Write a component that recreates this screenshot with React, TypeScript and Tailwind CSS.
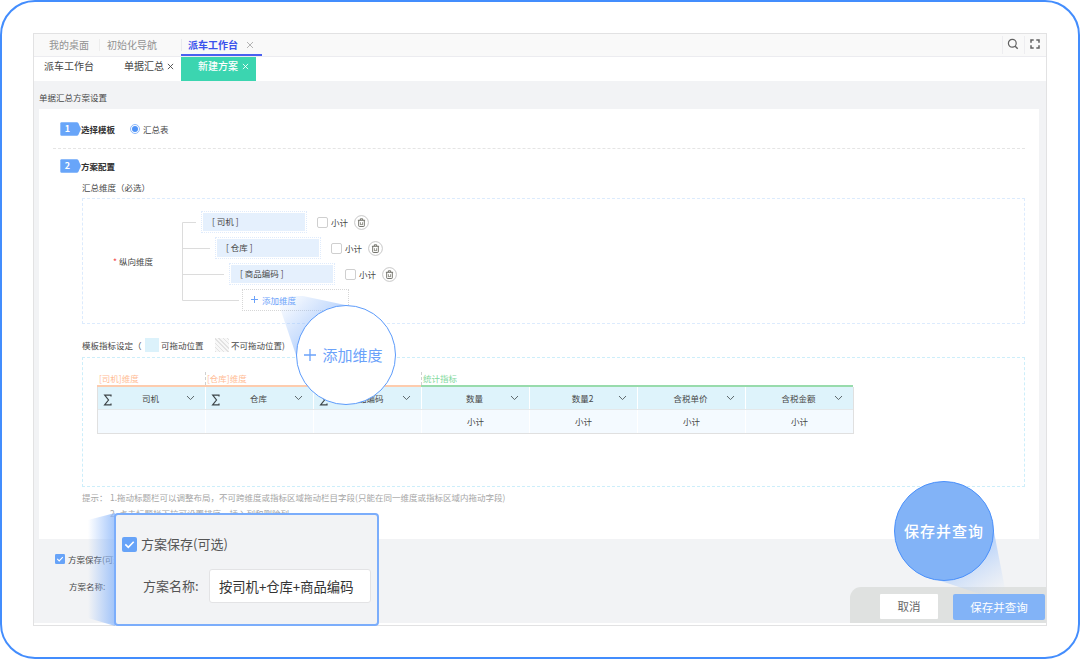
import React from 'react';

const dimensions = [
  { name: '[ 司机 ]', indent: 'ml-0' },
  { name: '[ 仓库 ]', indent: 'ml-[14px]' },
  { name: '[ 商品编码 ]', indent: 'ml-[28px]' },
];

const columns = [
  { title: '司机', label: '[司机]维度', sum: true, total: '' },
  { title: '仓库', label: '[仓库]维度', sum: true, total: '' },
  { title: '商品编码', label: '', sum: true, total: '' },
  { title: '数量', label: '统计指标', sum: false, total: '小计' },
  { title: '数量2', label: '', sum: false, total: '小计' },
  { title: '含税单价', label: '', sum: false, total: '小计' },
  { title: '含税金额', label: '', sum: false, total: '小计' },
];

function CloseIcon({ className }: { className: string }) {
  return (
    <svg viewBox="0 0 8 8" className={`shrink-0 ${className}`} fill="none" stroke="currentColor">
      <path d="M1 1l6 6M7 1L1 7" />
    </svg>
  );
}

function TrashIcon() {
  return (
    <svg viewBox="0 0 15 15" className="ml-[6px] h-[15px] w-[15px] shrink-0" fill="none">
      <circle cx="7.5" cy="7.5" r="6.9" stroke="#b9b9b9" strokeWidth="0.8" />
      <path d="M3.9 5.3h7.2M6.3 5.1V3.8h2.4v1.3M4.7 5.5v5.3q0 .7.7.7h4.2q.7 0 .7-.7V5.5" stroke="#64645c" strokeWidth="0.9" />
      <path d="M6.5 7.2v2.4M8.5 7.2v2.4M6 9.6h3" stroke="#85857c" strokeWidth="0.8" />
    </svg>
  );
}

function CheckedBox({ className }: { className: string }) {
  return (
    <svg viewBox="0 0 15 15" className={`shrink-0 ${className}`}>
      <rect width="15" height="15" rx="2" fill="#67a3f8" />
      <path d="M3.3 7.4l3 3 5.4-5.6" fill="none" stroke="#fff" strokeWidth="1.6" />
    </svg>
  );
}

function StepBadge({ step }: { step: number }) {
  return (
    <div className="relative h-[14px] w-[21px] shrink-0">
      <svg viewBox="0 0 21 14" className="absolute inset-0 h-full w-full">
        <path d="M1.5 0.3h15.3q1 0 1.5.8L21 7l-2.7 5.9q-.5.8-1.5.8H1.5Q.3 13.7.3 12.5v-11Q.3.3 1.5.3z" fill="#68a5f9" />
      </svg>
      <span className="relative block w-[15px] text-center text-[9px] leading-[14px] font-bold text-white">{step}</span>
    </div>
  );
}

function TopTabs() {
  return (
    <div className="flex h-[23px] shrink-0 items-center border-b border-[#ececf0] bg-[#f9f9f9] text-[10px] text-[#929292]">
      <span className="ml-[15px] w-[40px]">我的桌面</span>
      <span className="ml-[10px] h-[12px] w-px bg-[#ededed]" />
      <span className="ml-[7px] w-[50px]">初始化导航</span>
      <span className="ml-[24px] h-[12px] w-px bg-[#e9e9ee]" />
      <div className="-ml-px flex h-[22px] w-[81px] items-center border-b-2 border-[#4a60f0] pt-px font-bold text-[#3a52ec]">
        <span className="ml-[7px] w-[50px]">派车工作台</span>
        <CloseIcon className="ml-[8px] h-[8px] w-[8px] text-[#b4b4b4]" />
      </div>
      <div className="mr-[6px] ml-auto flex h-full items-center text-[#616161]">
        <span className="h-[18px] w-px bg-[#ededf0]" />
        <svg viewBox="0 0 12 12" className="-mt-[2px] ml-[4px] h-[12px] w-[12px]" fill="none" stroke="currentColor" strokeWidth="1.2">
          <circle cx="5.3" cy="5.3" r="3.9" />
          <path d="M8.2 8.2l2.5 2.5" strokeWidth="1.4" />
        </svg>
        <span className="ml-[5px] h-[18px] w-px bg-[#ededf0]" />
        <svg viewBox="0 0 10 10" className="-mt-[2px] ml-[5px] h-[10px] w-[10px]" fill="none" stroke="currentColor" strokeWidth="1.5">
          <path d="M3.7 1H1v2.7M6.3 1H9v2.7M9 6.3V9H6.3M3.7 9H1V6.3" />
        </svg>
      </div>
    </div>
  );
}

function SubTabs() {
  return (
    <div className="flex h-[24px] shrink-0 bg-white text-[10px] leading-[18px] text-[#444]">
      <span className="ml-[10px] w-[50px]">派车工作台</span>
      <div className="ml-[30px] flex">
        <span className="w-[40px]">单据汇总</span>
        <CloseIcon className="mt-[6px] ml-[3px] h-[7px] w-[7px]" />
      </div>
      <div className="ml-[7px] flex h-[24px] w-[75px] bg-[#3bd5b0] text-white">
        <span className="ml-[17px] w-[40px] font-medium">新建方案</span>
        <CloseIcon className="mt-[6px] ml-[4px] h-[7px] w-[7px]" />
      </div>
    </div>
  );
}

function DimensionBox() {
  return (
    <div className="mt-[4px] ml-[43px] flex h-[126px] w-[943px] border border-dashed border-[#dcebfd]">
      <div className="mt-[56px] ml-[30px] flex h-[12px] w-[69px] leading-[12px]">
        <span className="mr-[2px] text-[#f24848]">*</span>
        <span>纵向维度</span>
      </div>
      <svg viewBox="0 0 58 82" className="mt-[21px] h-[82px] w-[58px] shrink-0" fill="none" stroke="#dcdcdc">
        <path d="M14 2.5H.5V80.5H57M.5 28.5H28M.5 54.5H42" />
      </svg>
      <div className="-ml-[39px] pt-[12px]">
        {dimensions.map((d) => (
          <div key={d.name} className={`mb-[4.2px] flex h-[22px] items-center ${d.indent}`}>
            <div className="h-[22px] w-[106px] border border-dotted border-[#dfebfc] p-px">
              <div className="h-[18px] bg-[#e5f0fd] pl-[9px] leading-[17px]">{d.name}</div>
            </div>
            <span className="ml-[10px] h-[11px] w-[11px] rounded-[2px] border border-[#cfcfcf]" />
            <span className="ml-[3px] w-[17px]">小计</span>
            <TrashIcon />
          </div>
        ))}
        <div className="-mt-px ml-[41px] flex h-[22px] w-[107px] items-center border border-dotted border-[#d6d6d6] pl-[8px] text-[#6ba2fa]">
          <svg viewBox="0 0 7 7" className="mr-[4px] h-[7px] w-[7px]" stroke="currentColor">
            <path d="M3.5 0v7M0 3.5h7" />
          </svg>
          添加维度
        </div>
      </div>
    </div>
  );
}

function TemplateTable() {
  return (
    <div className="ml-[14px] w-[757px] pt-[14px]">
      <div className="flex h-[15px]">
        {columns.map((col, i) => (
          <div key={col.title} className={`flex w-[108px] flex-col ${i < 3 ? 'text-[#ffbd96]' : 'text-[#83d99e]'}`}>
            <div className="flex h-[13px] leading-[13px]">
              <span className={`mr-px h-full w-px ${col.label && i > 0 ? 'bg-[repeating-linear-gradient(180deg,#d0d0d0_0px,#d0d0d0_3px,#fff_3px,#fff_5px)]' : ''}`} />
              {col.label}
            </div>
            <div className={`h-[2px] ${i < 3 ? 'bg-[#fdccae]' : 'bg-[#98dbac]'}`} />
          </div>
        ))}
      </div>
      <div className="border border-t-0 border-[#e0e0e0]">
        <div className="flex h-[23px] border-b border-[#e4e8ea] bg-white">
          {columns.map((col) => (
            <div key={col.title} className="mr-px flex h-[22px] w-[107px] shrink-0 items-center bg-[#def3fb] last:mr-0">
              <span className="w-[17px] pl-[5px]">
                {col.sum && (
                  <svg viewBox="0 0 9 12" className="mt-[3px] h-[12px] w-[9px]" fill="none" stroke="#3d4548" strokeWidth="1.2">
                    <path d="M8 2.6V1.2H1.7L5.5 6 1.6 10.9H8V9.4" />
                  </svg>
                )}
              </span>
              <span className="w-[71px] text-center">{col.title}</span>
              <svg viewBox="0 0 9 6" className="h-[6px] w-[9px]" fill="none" stroke="#5d686c">
                <path d="M1 1l3.5 3.6L8 1" />
              </svg>
            </div>
          ))}
        </div>
        <div className="flex h-[23px] bg-white">
          {columns.map((col) => (
            <div key={col.title} className="mr-px w-[107px] shrink-0 bg-[#f4faff] text-center leading-[23px] last:mr-0">
              {col.total}
            </div>
          ))}
        </div>
      </div>
    </div>
  );
}

function SavePopup() {
  return (
    <div className="absolute top-[513px] left-[114px] h-[113px] w-[265px] rounded-[4px] border-2 border-[#7badfb] bg-[#f2f3f5] text-[13px] leading-[18px] text-[#555]">
      <div className="mt-[20px] ml-[6px] flex items-center">
        <CheckedBox className="h-[15px] w-[15px]" />
        <span className="ml-[4px]">方案保存(可选)</span>
      </div>
      <div className="mt-[16px] ml-[27px] flex items-center">
        <span className="w-[66px]">方案名称:</span>
        <div className="h-[34px] w-[162px] rounded-[3px] border border-[#e3e3e5] bg-white pl-[9px] text-[13.3px] leading-[33px] whitespace-nowrap text-[#333]">
          按司机+仓库+商品编码
        </div>
      </div>
    </div>
  );
}

// light beams that connect each magnified callout with its source
function Beams() {
  return (
    <svg viewBox="0 0 1080 660" className="absolute inset-0 h-[660px] w-[1080px]">
      <defs>
        <linearGradient id="beamAdd" gradientUnits="userSpaceOnUse" x1="284" y1="294" x2="328" y2="338">
          <stop offset="0" stopColor="#8db8fa" stopOpacity="0" />
          <stop offset="1" stopColor="#8db8fa" stopOpacity="0.7" />
        </linearGradient>
        <linearGradient id="beamName" gradientUnits="userSpaceOnUse" x1="88" y1="0" x2="115" y2="0">
          <stop offset="0" stopColor="#8db8fa" stopOpacity="0" />
          <stop offset="1" stopColor="#8db8fa" stopOpacity="0.8" />
        </linearGradient>
        <linearGradient id="beamSave" gradientUnits="userSpaceOnUse" x1="963" y1="548" x2="994" y2="598">
          <stop offset="0" stopColor="#a5c8fb" stopOpacity="0.9" />
          <stop offset="1" stopColor="#c5dafa" stopOpacity="0" />
        </linearGradient>
      </defs>
      <path d="M276 296H303L350 306L297 358Z" fill="url(#beamAdd)" />
      <path d="M88 520L115 513V626L88 618Z" fill="url(#beamName)" />
      <path d="M994 532L1006 594H980L938 580Z" fill="url(#beamSave)" />
    </svg>
  );
}

export default function App() {
  return (
    <div className="relative h-[660px] w-[1080px] overflow-hidden bg-white font-['Noto_Sans_CJK_SC','Noto_Sans',sans-serif]">
      <div className="h-[659px] w-[1080px] rounded-[35px] border-2 border-[#438dfd] pt-[31px] pl-[31px]">
        <div className="flex h-[593px] w-[1014px] flex-col border border-[#e2e2e3] bg-[#f2f3f5] text-[8.5px] leading-[12px] text-[#484848]">
          <TopTabs />
          <SubTabs />
          <h1 className="mt-[10px] ml-[5px] h-[18px] shrink-0">单据汇总方案设置</h1>

          <div className="ml-[5px] h-[430px] w-[1000px] shrink-0 bg-white">
            <div className="flex h-[39px] items-center pt-px pl-[21px]">
              <StepBadge step={1} />
              <span className="w-[35px] font-bold text-[#333]">选择模板</span>
              <span className="ml-[14px] flex h-[10px] w-[10px] items-center justify-center rounded-full border border-[#8fbafa]">
                <span className="h-[6px] w-[6px] rounded-full bg-[#4f93f7]" />
              </span>
              <span className="ml-[3px]">汇总表</span>
            </div>
            <div className="ml-[14px] w-[972px] border-b border-dashed border-[#e5e5e5]" />
            <div className="mt-[9px] flex h-[15px] items-center pl-[21px]">
              <StepBadge step={2} />
              <span className="font-bold text-[#333]">方案配置</span>
            </div>
            <div className="mt-[8px] ml-[43px] h-[13px]">汇总维度（必选）</div>
            <DimensionBox />

            <div className="mt-[12px] ml-[43px] flex h-[17px] items-center">
              <span className="w-[63px] whitespace-nowrap">模板指标设定（</span>
              <span className="h-[14px] w-[14px] bg-[#dcf2fb]" />
              <span className="ml-[2px] w-[43px]">可拖动位置</span>
              <span className="ml-[11px] h-[14px] w-[14px] bg-[repeating-linear-gradient(45deg,#e2e2e2_0px,#e2e2e2_1px,#f8f8f8_1px,#f8f8f8_3px)]" />
              <span className="ml-[2px]">不可拖动位置)</span>
            </div>

            <div className="mt-[4px] ml-[43px] h-[130px] w-[943px] border border-dashed border-[#cdeefa]">
              <TemplateTable />
            </div>
            <div className="mt-[4px] ml-[43px] flex text-[#a6a6a6]">
              <span className="w-[28px]">提示：</span>
              <div>
                <p className="whitespace-nowrap">1.拖动标题栏可以调整布局，不可跨维度或指标区域拖动栏目字段(只能在同一维度或指标区域内拖动字段)</p>
                <p className="mt-[4px]">2. 点击标题栏下拉可设置排序、插入列和删除列</p>
              </div>
            </div>
          </div>

          <div className="flex flex-1 border-b-2 border-white">
            <div className="pt-[14px] pl-[21px]">
              <div className="flex items-center">
                <CheckedBox className="h-[10px] w-[10px]" />
                <span className="ml-[3px]">方案保存(可选)</span>
              </div>
              <div className="mt-[15px] ml-[14px]">方案名称:</div>
            </div>
            <div className="mt-[48px] ml-auto flex h-[36px] w-[196px] rounded-tl-[11px] bg-[#dfe1e0] pt-[7px] pl-[30px] text-center text-[11.5px] leading-[25px]">
              <button className="h-[25px] w-[58px] rounded-[1px] bg-white text-[#666]">取消</button>
              <button className="ml-[15px] h-[26px] w-[92px] rounded-[2px] bg-[#82b3f7] text-white">保存并查询</button>
            </div>
          </div>
        </div>
      </div>

      <Beams />
      <SavePopup />
      <div className="absolute top-[305px] left-[296px] flex h-[100px] w-[100px] items-center justify-center rounded-full border-[1.5px] border-[#5c9bfb] bg-white pr-[5px] text-[15px] text-[#6ba2fa]">
        <svg viewBox="0 0 12 12" className="mr-[6px] h-[12px] w-[12px]" stroke="currentColor" strokeWidth="1.3">
          <path d="M6 0v12M0 6h12" />
        </svg>
        添加维度
      </div>
      <div className="absolute top-[481px] left-[894px] flex h-[100px] w-[100px] items-center justify-center rounded-full border border-[#4a90fb] bg-[#82b3f7] text-[15px] font-medium tracking-[1px] whitespace-nowrap text-white">
        保存并查询
      </div>
    </div>
  );
}
